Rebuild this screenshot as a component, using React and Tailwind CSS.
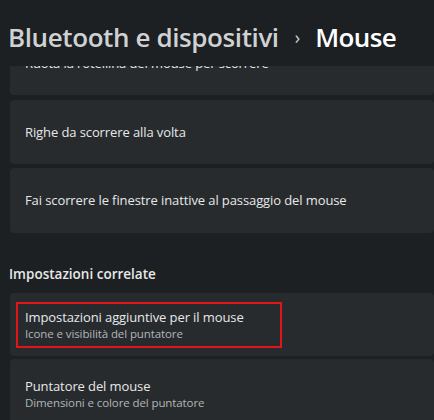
import React from 'react';

const Card = ({ title, subtitle, highlight, className = '' }) => (
  <div className={`flex items-center ml-[10px] rounded-[4px] bg-[#272b2e] ${className}`}>
    {highlight ? (
      <div className="ml-[6px] w-[266px] h-[46px] border-2 border-[#e0161b] pl-[7px] flex flex-col justify-center">
        <p className="text-[13px] leading-[17px] text-[#e8e8e8] tracking-[-0.1px]">{title}</p>
        <p className="text-[11.5px] leading-[15px] text-[#b4b6b7] tracking-[-0.1px]">{subtitle}</p>
      </div>
    ) : (
      <div className="pl-[15px] flex flex-col justify-center">
        <p className="text-[13px] leading-[17px] text-[#e8e8e8] tracking-[-0.1px]">{title}</p>
        {subtitle && <p className="text-[11.5px] leading-[15px] text-[#b4b6b7] tracking-[-0.1px]">{subtitle}</p>}
      </div>
    )}
  </div>
);

export default function App() {
  return (
    <div
      className="w-[434px] h-[420px] bg-[#1c2023] flex flex-col overflow-hidden"
      style={{ fontFamily: '"Open Sans", "Noto Sans", sans-serif' }}
    >
      <header className="h-[66px] shrink-0 flex items-center pl-[8px] pt-[8px] relative z-10 bg-[#1c2023]">
        <h1 className="text-[26px] font-semibold text-[#cfd1d2] tracking-[-0.4px]">Bluetooth e dispositivi</h1>
        <span className="ml-[16px] mr-[15px] text-[18px] text-[#cfd1d2]">›</span>
        <h1 className="text-[26px] font-semibold text-white tracking-[-0.6px]">Mouse</h1>
      </header>
      <div className="flex-1 overflow-hidden">
        <div className="-mt-[35px] flex flex-col">
          <Card title="Ruota la rotellina del mouse per scorrere" className="h-[64px]" />
          <Card title="Righe da scorrere alla volta" className="h-[64px] mt-[5px]" />
          <Card title="Fai scorrere le finestre inattive al passaggio del mouse" className="h-[65px] mt-[4px]" />
          <h2 className="ml-[9px] mt-[32px] text-[13.5px] font-semibold text-[#e8e8e8] leading-[18px]">Impostazioni correlate</h2>
          <Card
            title="Impostazioni aggiuntive per il mouse"
            subtitle="Icone e visibilità del puntatore"
            highlight
            className="h-[63px] mt-[10px]"
          />
          <Card
            title="Puntatore del mouse"
            subtitle="Dimensioni e colore del puntatore"
            className="h-[69px] mt-[3px]"
          />
        </div>
      </div>
    </div>
  );
}
